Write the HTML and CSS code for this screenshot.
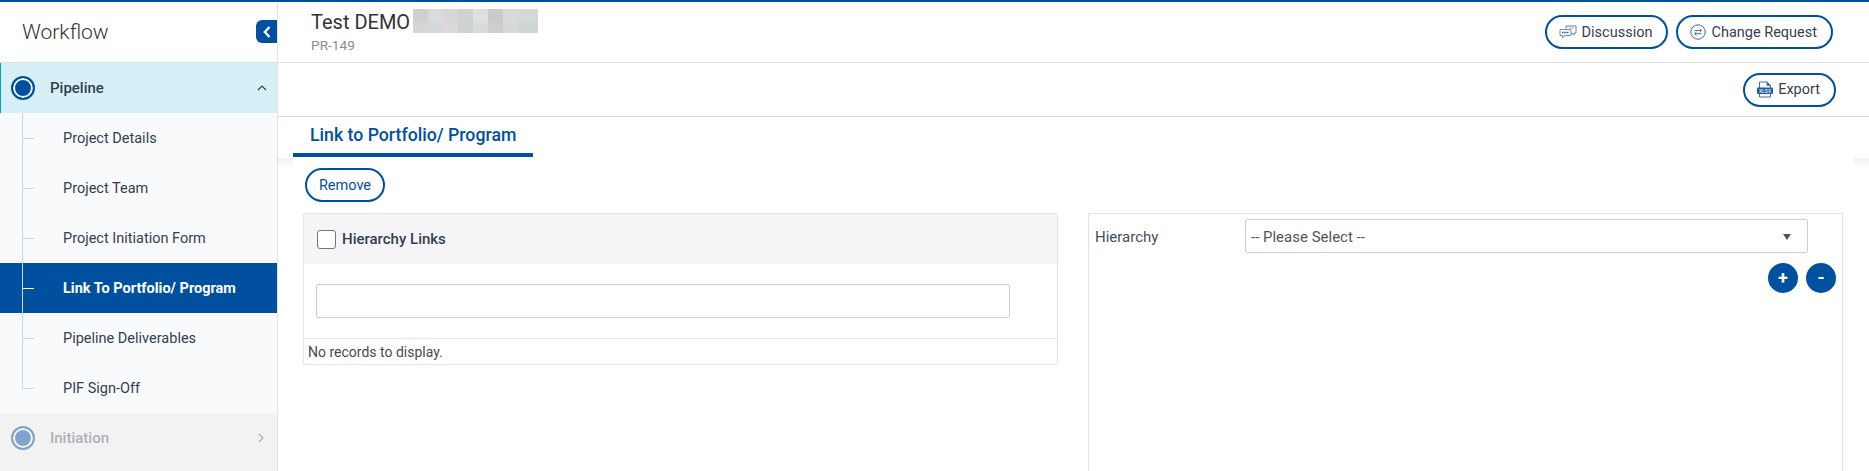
FILE: index.html
```html
<!DOCTYPE html>
<html lang="en">
<head>
<meta charset="utf-8">
<title>Link to Portfolio/ Program</title>
<link rel="stylesheet" href="styles.css">
</head>
<body>
<div class="app">
  <aside class="sidebar">
    <div class="side-head">
      <span class="side-title">Workflow</span>
      <button class="collapse" aria-label="Collapse">
        <svg width="10" height="14" viewBox="0 0 10 14"><path d="M7.500 2 L2.800 7 L7.500 12" fill="none" stroke="#fff" stroke-width="2.400"/></svg>
      </button>
    </div>
    <div class="stage stage-open">
      <span class="dot"></span>
      <span class="stage-name">Pipeline</span>
      <svg class="chev" width="10" height="6" viewBox="0 0 10 6"><path d="M1 5 L5 1 L9 5" fill="none" stroke="#333f50" stroke-width="1.200"/></svg>
    </div>
    <ul class="steps">
      <li class="step">Project Details</li>
      <li class="step">Project Team</li>
      <li class="step">Project Initiation Form</li>
      <li class="step step-active">Link To Portfolio/ Program</li>
      <li class="step">Pipeline Deliverables</li>
      <li class="step">PIF Sign-Off</li>
    </ul>
    <div class="stage stage-off">
      <span class="dot"></span>
      <span class="stage-name">Initiation</span>
      <svg class="chev" width="6" height="10" viewBox="0 0 6 10"><path d="M1 1 L5 5 L1 9" fill="none" stroke="#a9aeb8" stroke-width="1.200"/></svg>
    </div>
  </aside>

  <main class="main">
    <header class="top">
      <div class="heading">
        <div class="title-line"><h1 class="title">Test DEMO</h1><span class="redacted"></span></div>
        <div class="code">PR-149</div>
      </div>
      <div class="actions">
        <button class="pill">
          <svg width="18" height="14" viewBox="0 0 18 14" fill="none"><path d="M7 3.500V1h10v7h-2v2l-2-2h-1" stroke="#5a7fb5" stroke-width="1"/><path d="M1 4.500h11v6H5.500L3.500 13v-2.500H1z" fill="#fff" stroke="#6f8db8" stroke-width="1"/><path d="M3 7.500h7" stroke="#0050a0" stroke-width="1.400" stroke-dasharray="1.400 .8"/><path d="M10 3h5" stroke="#c98a8a" stroke-width=".8"/></svg>
          Discussion
        </button>
        <button class="pill">
          <svg width="16" height="16" viewBox="0 0 16 16" fill="none"><circle cx="8" cy="8" r="7.200" stroke="#3f6aa8" stroke-width="1"/><path d="M4.500 6.500h6.500M9.500 4.600 11.400 6.500 9.500 8.200" stroke="#7a6a70" stroke-width="1"/><path d="M11.500 9.700H5M6.500 7.900 4.600 9.700l1.900 1.800" stroke="#3f6aa8" stroke-width="1"/></svg>
          Change Request
        </button>
      </div>
    </header>
    <div class="toolbar">
      <button class="pill">
        <svg width="16" height="17" viewBox="0 0 16 17" fill="none"><path d="M2.500 7V1h7.500l3.500 3.500V7M2.500 13v3h11v-3" stroke="#3f6aa8" stroke-width="1"/><path d="M10 1v3.500h3.500" fill="#3f6aa8" stroke="#3f6aa8" stroke-width=".8"/><rect y="6.500" width="16" height="6.500" rx="1" fill="#1f5ba3"/><text class="xlsx" x="8" y="11.500" text-anchor="middle">XLSX</text></svg>
        Export
      </button>
    </div>
    <div class="tabs"><span class="tab">Link to Portfolio/ Program</span></div>
    <div class="content-wrap">
      <section class="content">
        <button class="pill pill-remove">Remove</button>
        <div class="columns">
          <div class="grid-card">
            <div class="grid-head">
              <span class="check"></span>
              <span class="grid-title">Hierarchy Links</span>
            </div>
            <div class="grid-filter"><input class="filter" type="text" aria-label="Filter"></div>
            <div class="grid-foot">No records to display.</div>
          </div>
          <div class="form-card">
            <div class="form-row">
              <label class="form-label">Hierarchy</label>
              <div class="select"><span>-- Please Select --</span><span class="caret"></span></div>
            </div>
            <div class="round-row">
              <button class="round">+</button>
              <button class="round">-</button>
            </div>
          </div>
        </div>
      </section>
    </div>
  </main>
</div>
</body>
</html>
```
FILE: styles.css
```css
* { box-sizing: border-box; }
html, body { margin: 0; height: 100%; background: #fff; }
body { font-family: Roboto, "Liberation Sans", sans-serif; color: #333f50; overflow: hidden; }
button { font-family: inherit; cursor: pointer; }
.app { display: flex; height: 471px; border-top: 2px solid #0050a0; }

.sidebar { width: 278px; flex: none; border-right: 1px solid #e3e4e6; background: #f9fafc; display: flex; flex-direction: column; }
.side-head { height: 61px; flex: none; background: #fff; border-bottom: 1px solid #dfe0e2; display: flex; align-items: center; justify-content: space-between; padding-left: 22px; }
.side-title { font-size: 21px; font-weight: 300; color: #333; }
.collapse { width: 21px; height: 23px; border: 0; padding: 0; background: #0050a0; border-radius: 6px 0 0 6px; display: flex; align-items: center; justify-content: center; margin-top: -1px; }

.stage { display: flex; align-items: center; flex: none; padding-left: 11px; padding-right: 10px; }
.stage-open { height: 50px; background: #d6f0f7; border-left: 1px solid #0aa2c0; padding-left: 10px; position: relative; }
.stage-off { flex: 1; height: 58px; background: #f2f2f2; padding-bottom: 8px; }
.dot { width: 24px; height: 24px; border-radius: 50%; border: 2px solid #0050a0; background: #0050a0; box-shadow: inset 0 0 0 2px #fff; flex: none; }
.stage-off .dot { border-color: #7fa5ce; background: #7fa5ce; }
.stage-name { font-size: 15px; font-weight: 500; margin-left: 15px; flex: 1; }
.stage-off .stage-name { color: #acb0ba; }
.stage-off .chev { margin-right: 3px; }

.steps { list-style: none; margin: 0; padding: 0; position: relative; }
.steps::before { content: ""; position: absolute; left: 22px; top: 0; height: 275px; width: 1px; background: #c5d9ee; z-index: 1; }
.step { height: 50px; display: flex; align-items: center; padding-left: 63px; font-size: 14.5px; position: relative; }
.step::before { content: ""; position: absolute; left: 22px; top: 25px; width: 12px; height: 1px; background: #c5d9ee; }
.step-active { background: #0050a0; color: #fff; font-weight: 700; }
.step-active::before { background: #fff; }

.main { flex: 1; min-width: 0; display: flex; flex-direction: column; }
.top { height: 61px; flex: none; border-bottom: 1px solid #dfe0e2; display: flex; justify-content: space-between; padding: 8px 36px 0 33px; }
.title-line { display: flex; align-items: flex-start; }
.title { margin: 0; font-size: 20px; font-weight: 400; line-height: 24px; color: #333; }
.redacted { width: 125px; height: 24px; margin-left: 3px; margin-top: -1px;
  background:
    linear-gradient(90deg, #d0d0d0 0 15px, #d9dcdf 15px 30px, #d6d6d6 30px 45px, #cdd2d3 45px 60px, #dfdfdf 60px 75px, #c8cbce 75px 90px, #d9d9d9 90px 105px, #d6d8d8 105px) 0 0 / 100% 14px no-repeat,
    linear-gradient(90deg, #d6d6d6 0 15px, #d3d8da 15px 30px, #dcd8dc 30px 45px, #ccd2d2 45px 60px, #d6dad9 60px 75px, #cfcfcf 75px 90px, #d6d8da 90px 105px, #cdd4d4 105px) 0 14px / 100% 10px no-repeat; }
.code { font-size: 13.7px; color: #8c8c8c; line-height: 16px; margin-top: 3px; }
.actions { display: flex; gap: 8px; padding-top: 5px; }

.pill { height: 34px; padding: 0 14px 0 12px; border: 2px solid #0050a0; border-radius: 17px; background: #fff; color: #333f50; font-size: 14.5px; display: inline-flex; align-items: center; gap: 5px; flex: none; }
.xlsx { font: 700 4.6px "Liberation Sans", sans-serif; fill: #dfe8f4; }
.toolbar { height: 54px; flex: none; border-bottom: 1px solid #dfe0e2; display: flex; justify-content: flex-end; align-items: center; padding-right: 33px; }
.tabs { height: 41px; flex: none; padding-left: 15px; display: flex; }
.tab { height: 40px; width: 240px; padding-left: 17px; border-bottom: 4px solid #0050a0; color: #0050a0; font-size: 17.7px; font-weight: 500; line-height: 37px; }

.content-wrap { flex: 1; min-height: 0; padding: 0 15px; display: flex; background: linear-gradient(#f1f1f1, #fff 10px); }
.content { flex: 1; min-width: 0; background: #fff; padding: 10px 11px 0 10px; display: flex; flex-direction: column; align-items: flex-start; }
.pill-remove { width: 80px; color: #0050a0; justify-content: center; padding: 0; margin-left: 2px; }
.columns { display: flex; width: 100%; flex: 1; min-height: 0; margin-top: 11px; gap: 30px; align-items: flex-start; }
.grid-card { width: 755px; flex: none; border: 1px solid #e3e4e6; border-radius: 2px; }
.grid-head { height: 50px; background: #f5f5f8; display: flex; align-items: center; padding-left: 13px; gap: 6px; }
.check { width: 19px; height: 19px; border: 1px solid #757575; border-radius: 3px; background: #fff; }
.grid-title { font-size: 15px; font-weight: 500; }
.grid-filter { height: 74px; padding: 20px 12px; }
.filter { display: block; width: 694px; height: 34px; border: 1px solid #c8ced9; border-radius: 2px; background: #fff; }
.grid-foot { height: 26px; border-top: 1px solid #e3e4e6; font-size: 14px; line-height: 26px; padding-left: 4px; color: #4a4a4a; }

.form-card { flex: 1; align-self: stretch; border: 1px solid #e0e1e3; border-bottom: 0; padding: 5px 0 0 6px; }
.form-row { display: flex; align-items: center; }
.form-label { width: 150px; font-size: 15px; color: #444e5e; padding-top: 1px; }
.select { width: 563px; height: 34px; border: 1px solid #c8ced9; border-radius: 2px; display: flex; align-items: center; justify-content: space-between; padding: 2px 16px 0 5px; font-size: 15px; color: #555; }
.caret { width: 0; height: 0; border-left: 4px solid transparent; border-right: 4px solid transparent; border-top: 6px solid #555; }
.round-row { display: flex; justify-content: flex-end; gap: 8px; margin-top: 10px; padding-right: 6px; }
.round { width: 30px; height: 30px; border: 0; padding: 0; border-radius: 50%; background: #0050a0; color: #fff; font-size: 18px; font-weight: 700; line-height: 30px; }
```
